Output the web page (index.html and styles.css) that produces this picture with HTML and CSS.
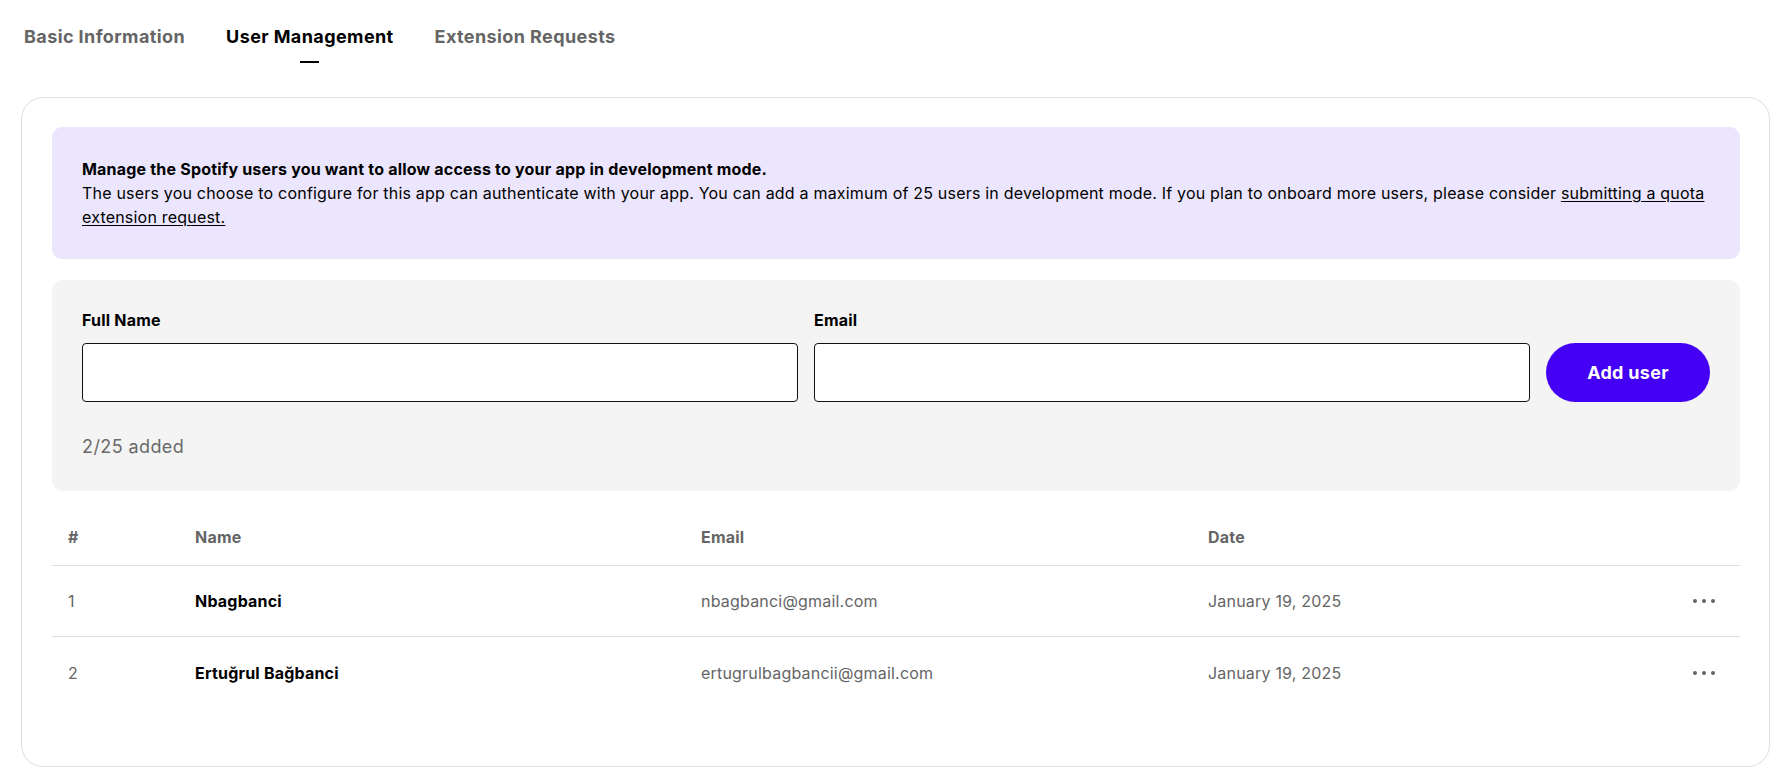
FILE: index.html
```html
<!DOCTYPE html>
<html lang="en">
<head>
<meta charset="utf-8">
<title>User Management</title>
<link rel="stylesheet" href="styles.css">
</head>
<body>
<nav class="tabs">
  <a class="tab">Basic Information</a>
  <a class="tab active">User Management<span class="indicator"></span></a>
  <a class="tab">Extension Requests</a>
</nav>
<main class="card">
  <section class="banner">
    <p class="banner-title">Manage the Spotify users you want to allow access to your app in development mode.</p>
    <p class="banner-text">The users you choose to configure for this app can authenticate with your app. You can add a maximum of 25 users in development mode. If you plan to onboard more users, please consider <a class="link">submitting a quota extension request.</a></p>
  </section>
  <section class="form-box">
    <div class="form-row">
      <label class="field">
        <span class="field-label">Full Name</span>
        <input class="input" type="text">
      </label>
      <label class="field">
        <span class="field-label">Email</span>
        <input class="input" type="text">
      </label>
      <button class="btn">Add user</button>
    </div>
    <p class="count">2/25 added</p>
  </section>
  <section class="table">
    <div class="row head">
      <div class="cell">#</div>
      <div class="cell">Name</div>
      <div class="cell">Email</div>
      <div class="cell">Date</div>
      <div class="cell"></div>
    </div>
    <div class="row">
      <div class="cell num">1</div>
      <div class="cell name">Nbagbanci</div>
      <div class="cell muted">nbagbanci@gmail.com</div>
      <div class="cell muted">January 19, 2025</div>
      <div class="cell actions"><span class="dots"><i></i><i></i><i></i></span></div>
    </div>
    <div class="row last">
      <div class="cell num">2</div>
      <div class="cell name">Ertuğrul Bağbanci</div>
      <div class="cell muted">ertugrulbagbancii@gmail.com</div>
      <div class="cell muted">January 19, 2025</div>
      <div class="cell actions"><span class="dots"><i></i><i></i><i></i></span></div>
    </div>
  </section>
</main>
</body>
</html>
```

FILE: styles.css
```css
* { box-sizing: border-box; }
html, body { margin: 0; padding: 0; background: #fff; }
body {
  font-family: "Inter", "Liberation Sans", sans-serif;
  color: #000;
  padding: 0 12px 0 21px;
}
p { margin: 0; }

.tabs {
  display: flex;
  gap: 41px;
  padding: 25px 0 0 3px;
  height: 97px;
}
.tab {
  display: flex;
  flex-direction: column;
  align-items: center;
  font-size: 18px;
  font-weight: 700;
  line-height: 24px;
  color: #656565;
  letter-spacing: 0.4px;
}
.tab.active { color: #000; }
.indicator {
  display: block;
  width: 19px;
  height: 2px;
  background: #000;
  margin-top: 12px;
}

.card {
  border: 1px solid #dedede;
  border-radius: 22px;
  padding: 29px 29px 0 30px;
  height: 670px;
}

.banner {
  background: #ebe6fd;
  border-radius: 10px;
  padding: 30px 30px;
  font-size: 16px;
  line-height: 24px;
  letter-spacing: 0.2px;
}
.banner-title { font-weight: 700; }
.link { text-decoration: underline; color: #000; text-underline-offset: 2px; }

.form-box {
  margin-top: 21px;
  background: #f4f4f4;
  border-radius: 10px;
  padding: 28px 30px 32px;
}
.form-row {
  display: flex;
  align-items: flex-end;
  gap: 16px;
}
.field {
  flex: 1;
  display: flex;
  flex-direction: column;
  gap: 11px;
}
.field-label {
  font-size: 16px;
  font-weight: 700;
  line-height: 24px;
  letter-spacing: 0.2px;
}
.input {
  height: 59px;
  border: 1px solid #121212;
  border-radius: 4px;
  background: #fff;
  font: inherit;
  padding: 0 12px;
}
.btn {
  flex: 0 0 164px;
  height: 59px;
  border: 0;
  border-radius: 30px;
  background: #4400f4;
  color: #fff;
  font-family: inherit;
  font-size: 18px;
  font-weight: 700;
  letter-spacing: 0.3px;
}
.count {
  margin-top: 33px;
  font-size: 18px;
  line-height: 24px;
  color: #6a6a6a;
  letter-spacing: 0.4px;
}

.table { margin-top: 18px; }
.row {
  display: grid;
  grid-template-columns: 127px 506px 507px 1fr 72px;
  align-items: center;
  height: 71px;
  border-bottom: 1px solid #dedede;
}
.row.head { height: 57px; }
.row.last { border-bottom: 0; }
.cell {
  padding-left: 16px;
  font-size: 16px;
  line-height: 24px;
  letter-spacing: 0.2px;
}
.head .cell {
  font-weight: 700;
  color: #656565;
}
.num { color: #656565; }
.name { font-weight: 700; }
.muted { color: #656565; }
.actions { padding-left: 0; display: flex; justify-content: center; }
.dots { display: flex; gap: 5px; }
.dots i {
  display: block;
  width: 4px;
  height: 4px;
  border-radius: 50%;
  background: #656565;
}
```
